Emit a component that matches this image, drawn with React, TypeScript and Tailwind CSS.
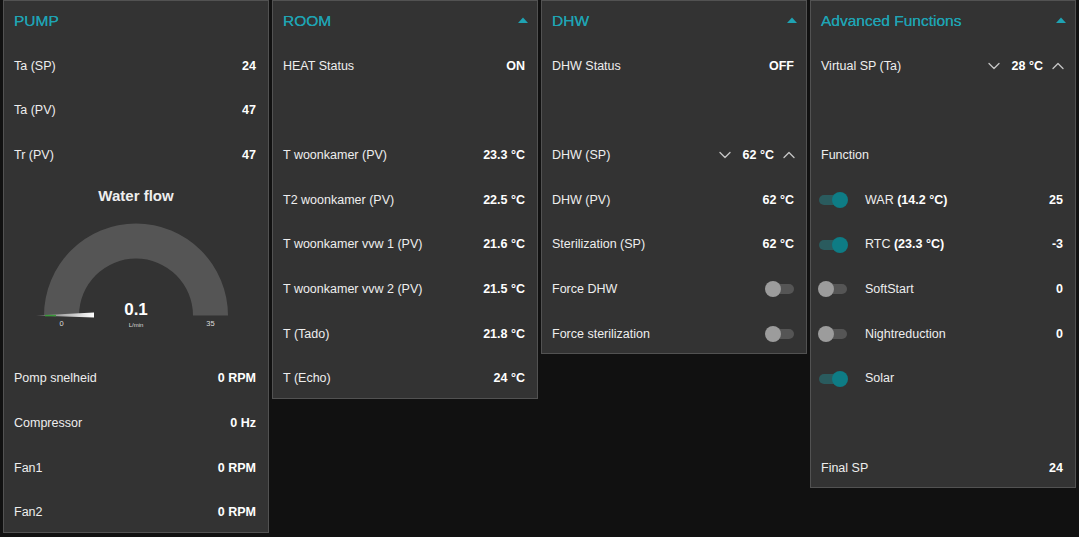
import { ChevronDown, ChevronUp } from "lucide-react";
import type { ReactNode } from "react";

const font = { fontFamily: '"Liberation Sans", Arial, sans-serif' };

function Caret() {
  return (
    <svg width="10" height="6" viewBox="0 0 10 6">
      <polygon points="0,6 5,0.5 10,6" fill="#1fa3b3" />
    </svg>
  );
}

function Panel({ title, caret, children }: { title: string; caret?: boolean; children: ReactNode }) {
  return (
    <div className="w-[266px] shrink-0 border border-[#525252] bg-[#333333]">
      <div className="h-[46px] pl-[10px] pr-[9px] pt-[10px] flex justify-between items-start">
        <span className="text-[15.5px] leading-[20px] text-[#1fa3b3] [text-shadow:0_0_0.4px_#1fa3b3]">{title}</span>
        {caret && (
          <span className="mt-[6px]">
            <Caret />
          </span>
        )}
      </div>
      <div className="flex flex-col gap-[6.7px]">{children}</div>
    </div>
  );
}

function Row({ label, value, children }: { label?: ReactNode; value?: ReactNode; children?: ReactNode }) {
  return (
    <div className="h-[38px] pl-[10px] pr-[12px] flex items-center justify-between text-[12.5px] text-[#eeeeee]">
      <span>{label}</span>
      {value !== undefined && <span className="font-bold text-white">{value}</span>}
      {children}
    </div>
  );
}

function Empty() {
  return <div className="h-[38px]" />;
}

function Switch({ on }: { on: boolean }) {
  return (
    <div className="relative w-[28px] h-[16px] flex items-center">
      <div className={on ? "w-full h-[10px] rounded-full bg-[#2a5b5e]" : "w-full h-[10px] rounded-full bg-[#555555]"} />
      <div
        className={
          on
            ? "absolute right-[-1px] top-0 w-[16px] h-[16px] rounded-full bg-[#0e7c85]"
            : "absolute left-[-1px] top-0 w-[16px] h-[16px] rounded-full bg-[#9c9c9c]"
        }
      />
    </div>
  );
}

function Numeric({ label, value }: { label: string; value: string }) {
  return (
    <Row label={label}>
      <div className="flex items-center mr-[-5px]">
        <ChevronDown size={20} strokeWidth={1.6} color="#c4c4c4" />
        <span className="ml-[8px] mr-[5px] font-bold text-white">{value}</span>
        <ChevronUp size={20} strokeWidth={1.6} color="#c4c4c4" />
      </div>
    </Row>
  );
}

function FnRow({ on, label, extra, value }: { on: boolean; label: string; extra?: string; value?: string }) {
  return (
    <div className="h-[38px] pl-[8px] pr-[12px] flex items-center text-[12.5px] text-[#eeeeee]">
      <Switch on={on} />
      <span className="ml-[18px]">
        {label}
        {extra && <b className="text-white"> {extra}</b>}
      </span>
      {value && <span className="ml-auto font-bold text-white">{value}</span>}
    </div>
  );
}

function Gauge() {
  const cx = 132;
  const cy = 134.6;
  const R = 92;
  const r = 57;
  return (
    <div className="h-[172px] relative">
      <div className="pt-[4px] text-center text-[15px] font-bold text-[#eeeeee]">Water flow</div>
      <svg className="absolute left-0 top-0" width="264" height="172" viewBox="0 0 264 172">
        <defs>
          <linearGradient id="needle" x1="0" x2="1" y1="0" y2="0">
            <stop offset="0" stopColor="#666666" />
            <stop offset="1" stopColor="#ffffff" />
          </linearGradient>
        </defs>
        <path
          d={`M ${cx - R} ${cy} A ${R} ${R} 0 0 1 ${cx + R} ${cy} L ${cx + r} ${cy} A ${r} ${r} 0 0 0 ${cx - r} ${cy} Z`}
          fill="#555555"
        />
        <polygon points={`32,${cy} 90,${cy - 3} 90,${cy + 2}`} fill="url(#needle)" />
        <line x1="41" y1={cy} x2="52" y2={cy} stroke="#3c9a3c" strokeWidth="1.5" />
        <text x={cx} y={cy - 1} textAnchor="middle" fill="#ffffff" fontSize="17" fontWeight="bold" style={font}>
          0.1
        </text>
        <text x={cx} y={cy + 11} textAnchor="middle" fill="#dddddd" fontSize="6" style={font}>
          L/min
        </text>
        <text x="57.5" y={cy + 10} textAnchor="middle" fill="#dddddd" fontSize="7.5" style={font}>
          0
        </text>
        <text x="206.5" y={cy + 10} textAnchor="middle" fill="#dddddd" fontSize="7.5" style={font}>
          35
        </text>
      </svg>
    </div>
  );
}

export default function App() {
  return (
    <div className="w-full h-[537px] bg-[#111111] flex items-start gap-[3px] pl-[3px] overflow-hidden" style={font}>
      <Panel title="PUMP">
        <Row label="Ta (SP)" value="24" />
        <Row label="Ta (PV)" value="47" />
        <Row label="Tr (PV)" value="47" />
        <Gauge />
        <Row label="Pomp snelheid" value="0 RPM" />
        <Row label="Compressor" value="0 Hz" />
        <Row label="Fan1" value="0 RPM" />
        <Row label="Fan2" value="0 RPM" />
      </Panel>

      <Panel title="ROOM" caret>
        <Row label="HEAT Status" value="ON" />
        <Empty />
        <Row label="T woonkamer (PV)" value="23.3 °C" />
        <Row label="T2 woonkamer (PV)" value="22.5 °C" />
        <Row label="T woonkamer vvw 1 (PV)" value="21.6 °C" />
        <Row label="T woonkamer vvw 2 (PV)" value="21.5 °C" />
        <Row label="T (Tado)" value="21.8 °C" />
        <Row label="T (Echo)" value="24 °C" />
      </Panel>

      <Panel title="DHW" caret>
        <Row label="DHW Status" value="OFF" />
        <Empty />
        <Numeric label="DHW (SP)" value="62 °C" />
        <Row label="DHW (PV)" value="62 °C" />
        <Row label="Sterilization (SP)" value="62 °C" />
        <Row label="Force DHW">
          <Switch on={false} />
        </Row>
        <Row label="Force sterilization">
          <Switch on={false} />
        </Row>
      </Panel>

      <Panel title="Advanced Functions" caret>
        <Numeric label="Virtual SP (Ta)" value="28 °C" />
        <Empty />
        <Row label="Function" />
        <FnRow on label="WAR" extra="(14.2 °C)" value="25" />
        <FnRow on label="RTC" extra="(23.3 °C)" value="-3" />
        <FnRow on={false} label="SoftStart" value="0" />
        <FnRow on={false} label="Nightreduction" value="0" />
        <FnRow on label="Solar" />
        <Empty />
        <Row label="Final SP" value="24" />
      </Panel>
    </div>
  );
}
